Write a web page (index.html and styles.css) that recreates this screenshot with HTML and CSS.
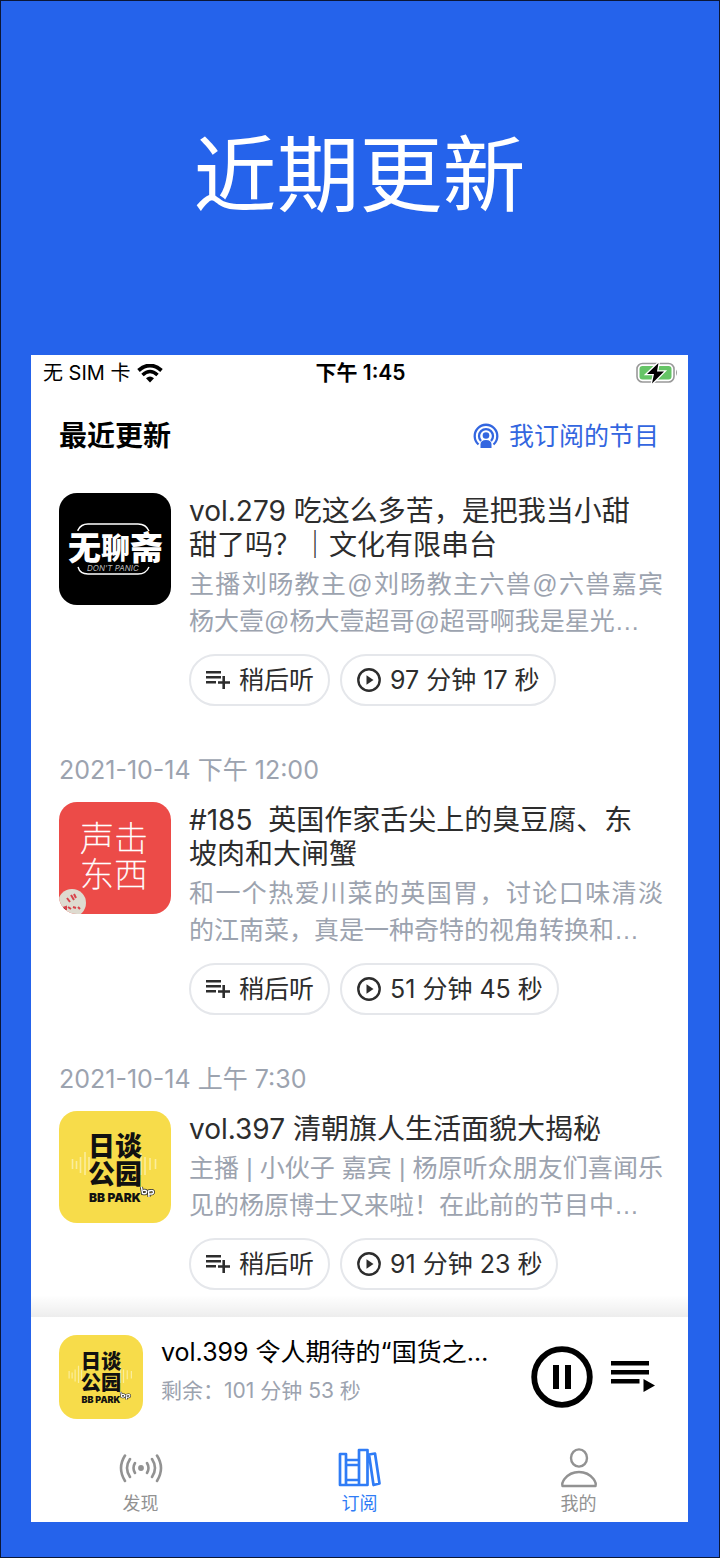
FILE: index.html
```html
<!DOCTYPE html>
<html lang="zh-CN">
<head>
<meta charset="utf-8">
<meta name="viewport" content="width=device-width, initial-scale=1">
<title>近期更新</title>
<link rel="stylesheet" href="styles.css">
</head>
<body>
<svg class="defs" aria-hidden="true">
  <defs>
    <symbol id="queue" viewBox="0 0 24 24"><path d="M0 3h15v2.400H0zM0 8h15v2.400H0zM0 13h10v2.400H0zM16.400 8h2.600v5.300H24v2.400h-5V21h-2.600v-5.300H12v-2.400h4.400z"/></symbol>
    <symbol id="play" viewBox="0 0 24 24"><circle cx="12" cy="12" r="10.700" fill="none" stroke="currentColor" stroke-width="2.400"/><path d="M9.500 7.200v9.600l7-4.800z"/></symbol>
    <symbol id="park" viewBox="0 0 112 112">
      <rect width="112" height="112" fill="#f7dc4a"/>
      <path d="M13.500 48v10M17.500 50v8M21.500 46v16M26 41v23M86 46v18M91 47v12M96.500 48v10M30 46v14M82 42v22" stroke="#fbed9c" stroke-width="1.600"/>
      <text x="29" y="45" class="art-cjk" font-size="27">日谈</text>
      <text x="29" y="73" class="art-cjk" font-size="27">公园</text>
      <text x="30" y="91" class="art-latin" font-size="12">BB PARK</text>
      <path d="M82.500 76l1 6.500q4 1 4-1.500t-3.500-1.500M90 86l-.5-6q5-1.500 5 1t-4 2" fill="none" stroke="#222" stroke-width="3"/><path d="M82.500 76l1 6.500q4 1 4-1.500t-3.500-1.500M90 86l-.5-6q5-1.500 5 1t-4 2" fill="none" stroke="#fff" stroke-width="1.500"/>
    </symbol>
  </defs>
</svg>

<header class="hero"><h1>近期更新</h1></header>

<main class="screen">
  <div class="status">
    <div class="carrier"><span>无 SIM 卡</span>
      <svg width="26" height="19" viewBox="0 0 26 19" fill="none" stroke="#000"><path d="M1.500 6.500Q13-3.500 24.500 6.500" stroke-width="3.800"/><path d="M5.500 11Q13 4 20.500 11" stroke-width="3.500"/><path d="M9 14.300Q13 10.800 17 14.300L13 18.500z" fill="#000" stroke="none"/></svg>
    </div>
    <time class="clock">下午 1:45</time>
    <div class="battery">
      <svg width="42" height="22" viewBox="0 0 42 22"><rect x="1" y="1.500" width="37" height="18.500" rx="5.500" fill="#fff" stroke="#999" stroke-width="1.600"/><rect x="3.500" y="4" width="32" height="13.500" rx="3" fill="#65c466"/><path d="M40 7.500q2 3.200 0 6.400z" fill="#999"/><path d="M22.500 1L11 12h7l-2 9.500L28 9.500h-7z" fill="#000" stroke="#fff" stroke-width="2.600" paint-order="stroke"/></svg>
    </div>
  </div>

  <section class="updates">
    <div class="heading">
      <h2>最近更新</h2>
      <a href="#subscriptions"><svg width="26" height="26" viewBox="0 0 26 26" fill="none" stroke="currentColor" stroke-width="2.300"><path d="M5.500 21.500A11.300 11.300 0 1 1 20.500 21.500"/><path d="M8 18A7 7 0 1 1 18 18"/><circle cx="13" cy="12.500" r="3.300" fill="currentColor" stroke="none"/><path d="M7.500 25v-3.500q0-4.500 5.500-4.500t5.500 4.500V25z" fill="currentColor" stroke="none"/></svg>我订阅的节目</a>
    </div>

    <article class="episode">
      <svg class="cover" viewBox="0 0 112 112" role="img" aria-label="无聊斋">
        <rect width="112" height="112" fill="#000"/>
        <path d="M19 38v-1q3-6 10-6h50q8 0 11 7M19 74q2 7 10 7h50q8 0 11-7" fill="none" stroke="#fff" stroke-width="1.400"/>
        <text x="9" y="67" class="art-cjk light" font-size="33">无</text>
        <text x="42" y="66" class="art-cjk light" font-size="29">聊</text>
        <text x="71" y="67" class="art-cjk light" font-size="33">斋</text>
        <text x="28" y="78" class="art-small" font-size="8">DON'T PANIC</text>
      </svg>
      <div class="body">
        <h3>vol.279 吃这么多苦，是把我当小甜<br>甜了吗？｜文化有限串台</h3>
        <p>主播刘旸教主@刘旸教主六兽@六兽嘉宾杨大壹@杨大壹超哥@超哥啊我是星光…</p>
        <div class="actions">
          <button type="button"><svg><use href="#queue"/></svg>稍后听</button>
          <button type="button"><svg><use href="#play"/></svg>97 分钟 17 秒</button>
        </div>
      </div>
    </article>

    <time class="date">2021-10-14 下午 12:00</time>
    <article class="episode">
      <svg class="cover" viewBox="0 0 112 112" role="img" aria-label="声东击西">
        <rect width="112" height="112" fill="#ec4b48"/>
        <text x="21" y="49" class="art-thin" font-size="34">声击</text>
        <text x="21" y="85" class="art-thin" font-size="34">东西</text>
        <circle cx="13" cy="101" r="14" fill="#dedbd0"/>
        <path d="M8 96l3 4M12 93l3 5M15 92l2 4M4 106l3-1v3M9 105l3 2M14 105l3 1M19 105l2 2" stroke="#d8434b" stroke-width="2"/>
      </svg>
      <div class="body">
        <h3>#185&nbsp; 英国作家舌尖上的臭豆腐、东<br>坡肉和大闸蟹</h3>
        <p>和一个热爱川菜的英国胃，讨论口味清淡的江南菜，真是一种奇特的视角转换和…</p>
        <div class="actions">
          <button type="button"><svg><use href="#queue"/></svg>稍后听</button>
          <button type="button"><svg><use href="#play"/></svg>51 分钟 45 秒</button>
        </div>
      </div>
    </article>

    <time class="date">2021-10-14 上午 7:30</time>
    <article class="episode">
      <svg class="cover" role="img" aria-label="日谈公园"><use href="#park"/></svg>
      <div class="body">
        <h3>vol.397 清朝旗人生活面貌大揭秘</h3>
        <p>主播 | 小伙子 嘉宾 | 杨原听众朋友们喜闻乐见的杨原博士又来啦！在此前的节目中…</p>
        <div class="actions">
          <button type="button"><svg><use href="#queue"/></svg>稍后听</button>
          <button type="button"><svg><use href="#play"/></svg>91 分钟 23 秒</button>
        </div>
      </div>
    </article>
  </section>

  <section class="player" aria-label="正在播放">
    <svg class="cover small" role="img" aria-label="日谈公园"><use href="#park"/></svg>
    <div class="track">
      <strong>vol.399 令人期待的“国货之…</strong>
      <span>剩余：101 分钟 53 秒</span>
    </div>
    <button type="button" aria-label="暂停"><svg width="62" height="62" viewBox="0 0 62 62"><circle cx="31" cy="31" r="27.800" fill="none" stroke="#000" stroke-width="5.800"/><path d="M22 19h6v24h-6zM34 19h6v24h-6z"/></svg></button>
    <button type="button" aria-label="播放列表"><svg width="44" height="32" viewBox="0 0 44 32"><path d="M0 0h38v4.400H0zM0 9h38v4.400H0zM0 18h28.500v4.400H0zM32.500 18v13L44 24.500z"/></svg></button>
  </section>

  <nav class="tabs">
    <a href="#discover"><svg width="44" height="40" viewBox="0 0 44 40" fill="none" stroke="currentColor" stroke-width="2.600" stroke-linecap="round"><circle cx="22" cy="20" r="1.600" fill="currentColor"/><path d="M16 15q-3 5 0 10M28 15q3 5 0 10M11 11q-6 9 0 18M33 11q6 9 0 18M6 7.500Q-2 20 6 33M38 7.500q8 12.500 0 25.500"/></svg>发现</a>
    <a href="#subscribed" class="active" aria-current="page"><svg width="44" height="40" viewBox="0 0 44 40" fill="none" stroke="currentColor" stroke-width="2.700" stroke-linejoin="round"><path d="M2 6h6v31H2zM8 12h12M8 17h12M8 32h12M8 37h12M21 2h8.500v35H21zM31 6.500l6-1 4.500 30-6 1.500z"/></svg>订阅</a>
    <a href="#mine"><svg width="44" height="40" viewBox="0 0 44 40" fill="none" stroke="currentColor" stroke-width="2.400" stroke-linejoin="round"><ellipse cx="22" cy="10" rx="8" ry="8.600"/><path d="M5.500 38q-1-3 2-7Q13 24 22 24t14.500 7q3 4 2 7z"/></svg>我的</a>
  </nav>
</main>
</body>
</html>
```
FILE: styles.css
```css
* { box-sizing: border-box; }

body {
  margin: 0;
  padding: 0 31px 35px 30px;
  border: 1px solid #0b1736;
  background: #2563eb;
  color: #2d2d2d;
  font-family: Inter, "Noto Sans CJK SC", sans-serif;
}

h1, h2, h3, p { margin: 0; font-weight: 400; }
a { color: inherit; text-decoration: none; }
button { margin: 0; padding: 0; border: 0; background: none; color: inherit; font: inherit; }
svg { display: block; flex: none; fill: currentColor; }
svg[fill="none"] { fill: none; }
.defs { position: absolute; width: 0; height: 0; }

.hero { padding: 124px 0 130px; text-align: center; color: #fff; }
.hero h1 { font-size: 83px; line-height: 100px; }

.screen { background: #fff; }

.status {
  display: grid;
  grid-template-columns: 1fr auto 1fr;
  align-items: center;
  padding: 0 10px 0 12px;
  color: #000;
  font-size: 20px;
  line-height: 36px;
}
.carrier { display: flex; align-items: center; gap: 6px; }
.clock { font-size: 21px; font-weight: 600; }
.battery { display: flex; justify-content: flex-end; }

.updates { padding: 25px 25px 0 28px; }
.heading { display: flex; justify-content: space-between; align-items: center; margin-bottom: 37px; padding-right: 4px; line-height: 40px; }
.heading h2 { color: #000; font-size: 28px; font-weight: 600; }
.heading a { display: flex; align-items: center; gap: 10px; color: #3366e0; font-size: 25px; }

.episode { display: flex; gap: 18px; }
.cover { width: 112px; height: 112px; border-radius: 18px; }
.cover.small { width: 84px; height: 84px; }
.body { flex: 1; min-width: 0; }
.body h3 { padding-top: 1px; font-size: 28px; line-height: 34px; }
.body p {
  margin: 4px 0 14px;
  color: #9ca3af;
  font-family: "Liberation Sans", "Noto Sans CJK SC", sans-serif;
  font-size: 25px;
  line-height: 37px;
  text-align: justify;
}

.actions { display: flex; gap: 10px; }
.actions button {
  display: flex;
  align-items: center;
  gap: 9px;
  height: 52px;
  padding: 0 14px 0 15px;
  border: 2px solid #e5e7eb;
  border-radius: 26px;
  font-size: 25px;
  line-height: 44px;
}
.actions svg { width: 24px; height: 24px; }

.date { display: block; margin: 48px 0 16px; color: #9ca3af; font-size: 25px; line-height: 32px; }

.player {
  position: relative;
  display: flex;
  align-items: center;
  gap: 18px;
  margin-top: 27px;
  padding: 18px 33px 18px 28px;
  background: #fff;
  color: #000;
}
.player::before {
  content: "";
  position: absolute;
  right: 0;
  bottom: 100%;
  left: 0;
  height: 22px;
  background: linear-gradient(rgba(0, 0, 0, 0), rgba(0, 0, 0, 0.07));
}
.track { display: flex; flex: 1; flex-direction: column; align-self: flex-start; gap: 8px; min-width: 0; white-space: nowrap; }
.track strong { font-size: 25px; font-weight: 400; line-height: 34px; }
.track span { color: #9ca3af; font-size: 21px; line-height: 28px; }

.tabs { display: grid; grid-template-columns: repeat(3, 1fr); padding: 11px 0 4px; color: #929292; font-size: 18px; line-height: 28px; }
.tabs a { display: flex; flex-direction: column; align-items: center; gap: 2px; }
.tabs .active { color: #2f7cf6; }

.art-cjk { font-family: "Liberation Sans", "Noto Sans CJK SC", sans-serif; font-weight: 900; fill: #111; }
.art-cjk.light { fill: #fff; }
.art-latin { font-family: Inter, sans-serif; font-weight: 900; fill: #111; }
.art-small { font-family: Inter, sans-serif; font-style: italic; fill: #bbb; }
.art-thin { font-family: "Liberation Sans", "Noto Sans CJK SC", sans-serif; font-weight: 100; fill: #fff; stroke: #fff; stroke-width: 0.5px; }
```
